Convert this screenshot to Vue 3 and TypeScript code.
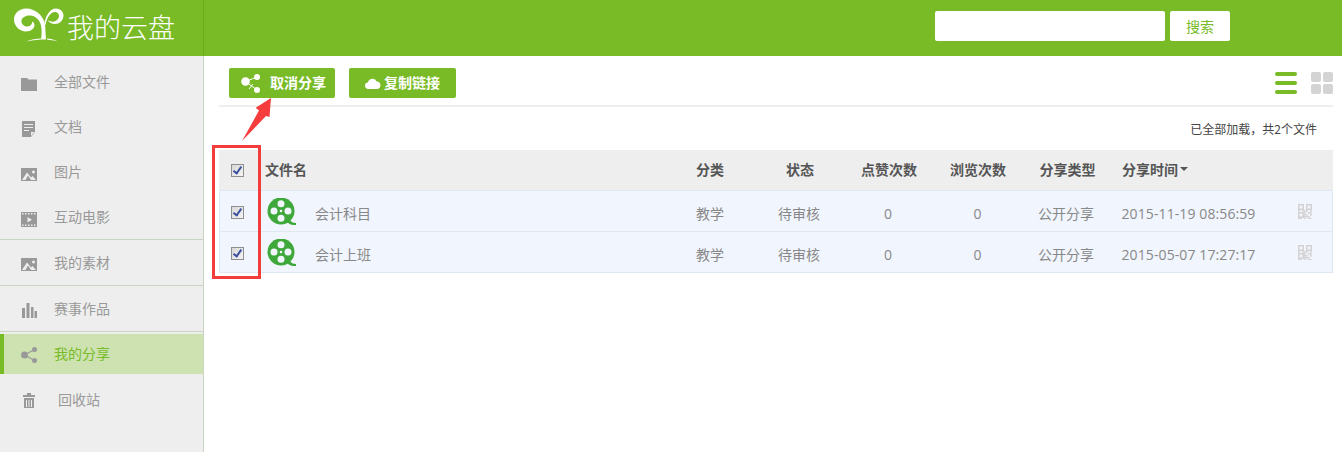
<script setup lang="ts">
interface NavItem { label: string; icon: string }
const groups: NavItem[][] = [
  [
    { label: '全部文件', icon: 'folder' },
    { label: '文档', icon: 'doc' },
    { label: '图片', icon: 'image' },
    { label: '互动电影', icon: 'film' },
  ],
  [{ label: '我的素材', icon: 'image' }],
  [{ label: '赛事作品', icon: 'bars' }],
]
const rows = [
  { name: '会计科目', time: '2015-11-19 08:56:59' },
  { name: '会计上班', time: '2015-05-07 17:27:17' },
]
const qrCells = [
  [0,0,0,0,0,0,0],[0,0,0,0,0,0,0],[0,0,0,0,0,0,0],[1,0,1,1,1,0,1],[0,0,0,1,0,1,1],[0,0,0,1,1,0,1],[0,0,0,1,1,1,0],[1,1,0,1,0,1,1],
].flatMap((r, y) => r.map((v, x) => ({ x, y, v }))).filter(c => c.v)
</script>

<template>
  <div class="page">
    <header class="top">
      <div class="brand">
        <svg class="logo" width="50" height="34" viewBox="14 9.500 50 34">
          <path fill="#fff" d="M26 10C19 10 14 15 14 21 14 28 20 33 26 33 31 33 34.500 30 34.500 26.500 34.500 25 33.500 23.500 32.500 23 32 26 30 28 27 28 24 28 21 25.500 21.500 22 22 19 26 16.500 30 17 36 17.500 41 22 41.500 30 41.800 34 41.500 38 41 41L46 41C45.500 36 45.500 30 45 26 44 18 36 10 26 10Z"/>
          <path fill="#fff" d="M44.500 24C46 17 50 10 56 10 60 10 63.500 13 63.500 17 63.500 22 59 25.500 55 25.500 52 25.500 49 24 47.500 21.500 50 23 52 23.500 54 23 57 22.500 59 20 59 17.500 59 15 57 13.500 55 13.500 51 13.500 47 18 45.500 27Z"/>
          <path fill="#fff" d="M26 43C31 41 36 40 41 40V41C36 41.500 31 42 26 43ZM47 40C50 40 54 41 58 43 54 42 50 41.500 47 41Z"/>
        </svg>
        <span class="title">我的云盘</span>
      </div>
      <div class="search">
        <input class="search-input" type="text" />
        <button class="search-btn">搜索</button>
      </div>
    </header>

    <div class="body">
      <aside class="side">
        <div v-for="(group, i) in groups" :key="i" class="group">
          <a v-for="item in group" :key="item.label" class="nav">
            <svg class="nav-icon" width="16" height="16" viewBox="0 0 16 16" fill="#999">
              <path v-if="item.icon === 'folder'" d="M0 2h6l1.500 1.500H16V15H0z"/>
              <path v-else-if="item.icon === 'doc'" fill-rule="evenodd" d="M1 0h13v11l-4 5H1zM3 3v1h9V3zM3 6v1h9V6zM3 9v1h5V9zM10 11v4l3.500-4z"/>
              <path v-else-if="item.icon === 'image'" fill-rule="evenodd" d="M0 2h16v13H0zM1 14h3.500L7 9.500 10 14h5l-3.500-4-1.500 1.500L6 6.500zM12.500 4.500a1.500 1.500 0 1 0 .01 0z"/>
              <path v-else-if="item.icon === 'film'" fill-rule="evenodd" d="M0 1h16v15H0zM1 2v1.500h1.500V2zM4 2v1.500h1.500V2zM7 2v1.500h1.500V2zM10 2v1.500h1.500V2zM13 2v1.500h1.500V2zM1 13.500V15h1.500v-1.500zM4 13.500V15h1.500v-1.500zM7 13.500V15h1.500v-1.500zM10 13.500V15h1.500v-1.500zM13 13.500V15h1.500v-1.500zM6.500 6v5.500l4.500-2.700z"/>
              <path v-else d="M1 6h3v10H1zM5.500 1h3v15h-3zM10 5h2.500v11H10zM13.500 9H16v7h-2.500z"/>
            </svg>
            <span class="nav-text">{{ item.label }}</span>
          </a>
        </div>
        <a class="nav active">
          <svg class="nav-icon" width="16" height="16" viewBox="0 0 16 16" fill="#999">
            <circle cx="3.500" cy="8" r="3.500"/><circle cx="13.500" cy="2.500" r="2.500"/><circle cx="13.500" cy="13.500" r="2.500"/>
            <path d="M3.500 8l10-5.500M3.500 8l10 5.500" stroke="#999" stroke-width="1.200"/>
          </svg>
          <span class="nav-text">我的分享</span>
        </a>
        <a class="nav trash">
          <svg class="nav-icon" width="14" height="16" viewBox="0 0 14 16" fill="#999">
            <path fill-rule="evenodd" d="M5 0h4v2h4v2H1V2h4zM2 5h10v10H2zM4 7v7h1V7zM6.500 7v7h1V7zM9 7v7h1V7z"/>
          </svg>
          <span class="nav-text">回收站</span>
        </a>
      </aside>

      <main class="main">
        <div class="toolbar">
          <button class="act act-cancel">
            <svg width="20" height="20" viewBox="0 0 20 20" fill="#fff">
              <circle cx="4.500" cy="8.500" r="4.300"/><circle cx="16" cy="4" r="3"/><circle cx="16" cy="17" r="3"/>
              <path d="M4.500 8.500L16 4M4.500 8.500L16 17M8 16l4-5" stroke="#fff" stroke-width="1"/>
            </svg>
            <span class="act-text">取消分享</span>
          </button>
          <button class="act act-copy">
            <svg width="16" height="11" viewBox="0 0 16 11" fill="#fff">
              <path d="M3.500 11a3.200 3.200 0 0 1-.5-6.400A4.600 4.600 0 0 1 11.800 3.500 3.800 3.800 0 0 1 12.500 11z"/>
            </svg>
            <span class="act-text">复制链接</span>
          </button>
          <div class="views">
            <div class="v-list"><i></i><i></i><i></i></div>
            <div class="v-grid"><i></i><i></i><i></i><i></i></div>
          </div>
        </div>

        <p class="loaded">已全部加载，共2个文件</p>

        <div class="table">
          <div class="grid head">
            <span class="cb"><span class="check"></span></span>
            <span class="name-col">文件名</span>
            <span>分类</span>
            <span>状态</span>
            <span>点赞次数</span>
            <span>浏览次数</span>
            <span>分享类型</span>
            <span class="sort">分享时间<b class="caret"></b></span>
            <span></span>
          </div>
          <div v-for="row in rows" :key="row.name" class="grid row">
            <span class="cb"><span class="check"></span></span>
            <span class="name-col file">
              <svg width="30" height="28" viewBox="0 0 30 28">
                <circle cx="14" cy="13" r="13.500" fill="#3fa83a"/>
                <path d="M20 24c3 3 6 3 9 3v-2c-3 0-5-1-6-3z" fill="#3fa83a"/>
                <g fill="#f1f5fd">
                  <circle cx="14" cy="5.800" r="3.500"/>
                  <circle cx="14" cy="20.200" r="3.500"/>
                  <circle cx="7" cy="13" r="3.500"/>
                  <circle cx="21" cy="13" r="3.500"/>
                  <circle cx="14" cy="13" r="1.300"/>
                </g>
              </svg>
              <span class="fname">{{ row.name }}</span>
            </span>
            <span>教学</span>
            <span>待审核</span>
            <span class="num">0</span>
            <span class="num">0</span>
            <span>公开分享</span>
            <span class="num time">{{ row.time }}</span>
            <span class="qr">
              <svg width="14" height="15" viewBox="0 0 14 15" fill="#d2d2d2">
                <path fill-rule="evenodd" d="M0 0h6v6H0zM1.500 1.500v3h3v-3zM8 0h6v6H8zM9.500 1.500v3h3v-3zM0 8h6v6H0zM1.500 9.500v3h3v-3z"/>
                <rect v-for="c in qrCells" :key="c.x + '-' + c.y" :x="c.x * 2" :y="c.y * 2" width="1.700" height="1.700"/>
              </svg>
            </span>
          </div>
        </div>
      </main>
    </div>

    <div class="mark-box"></div>
    <svg class="mark-arrow" width="36" height="48" viewBox="0 0 36 48">
      <path fill="#f63c3c" d="M32 1 16.700 10.700 20 13.500 3 44 27 19 30.500 20Z"/>
    </svg>
  </div>
</template>

<style>
html, body { margin: 0; background: #fff; }
</style>

<style scoped>
.page {
  position: relative;
  width: 1342px;
  height: 452px;
  overflow: hidden;
  display: flex;
  flex-direction: column;
  font-family: "Noto Sans CJK SC", "Liberation Sans", sans-serif;
  font-size: 14px;
  color: #888;
}
.top {
  height: 56px;
  flex: none;
  display: flex;
  align-items: flex-start;
  background: #78bb27;
}
.brand {
  width: 204px;
  height: 56px;
  box-sizing: border-box;
  flex: none;
  display: flex;
  align-items: center;
  padding-left: 14px;
  border-right: 1px solid #6cab20;
}
.logo { flex: none; margin-top: -6px; }
.title {
  margin-left: 3px;
  font-size: 27px;
  font-weight: 300;
  color: #fff;
  line-height: 54px;
  padding-bottom: 2px;
  white-space: nowrap;
}
.search {
  margin-left: 731px;
  margin-top: 11px;
  display: flex;
  gap: 5px;
}
.search-input {
  width: 230px;
  height: 30px;
  box-sizing: border-box;
  border: 0;
  border-radius: 2px;
  background: #fff;
  padding: 0;
}
.search-btn {
  width: 60px;
  height: 30px;
  border: 0;
  border-radius: 2px;
  background: #fff;
  color: #78bb27;
  font: inherit;
  font-size: 14px;
  padding: 0;
}
.body { flex: 1; display: flex; min-height: 0; }
.side {
  width: 204px;
  flex: none;
  box-sizing: border-box;
  background: #eee;
  border-right: 1px solid #c8d5c0;
  padding-top: 3px;
}
.group { border-bottom: 1px solid #c8d5c0; }
.group:nth-child(3) { margin-bottom: 2px; }
.nav {
  display: flex;
  align-items: center;
  height: 45px;
  padding-left: 21px;
  color: #999;
  font-size: 14px;
  box-sizing: border-box;
}
.nav-icon { flex: none; margin: 2px 17px 0 0; }
.group:first-child .nav-icon { margin-top: 4px; }
.nav-text { margin-top: -2px; }
.active {
  height: 40px;
  background: #cde2b0;
  border-left: 4px solid #78bb27;
  padding-left: 17px;
  color: #78bb27;
}
.trash {
  height: 52px;
  padding-left: 22px;
}
.trash .nav-icon { margin-right: 22px; }
.main {
  flex: 1;
  min-width: 0;
  box-sizing: border-box;
  padding: 12px 9px 0 15px;
}
.toolbar {
  display: flex;
  align-items: flex-start;
  height: 37px;
  border-bottom: 2px solid #eee;
  padding-left: 10px;
}
.act {
  height: 30px;
  border: 0;
  border-radius: 2px;
  background: #78bb27;
  color: #fff;
  font: inherit;
  font-size: 14px;
  font-weight: 700;
  display: flex;
  align-items: center;
  padding: 0;
  white-space: nowrap;
}
.act-text { margin-top: -2px; }
.act-cancel { width: 106px; padding-left: 12px; gap: 9px; }
.act-copy { width: 107px; margin-left: 14px; padding-left: 16px; gap: 3px; }
.views { margin-left: auto; display: flex; gap: 14px; align-items: flex-start; padding-top: 4px; }
.v-list { width: 22px; display: flex; flex-direction: column; gap: 5px; }
.v-list i { display: block; height: 4px; border-radius: 2px; background: #78bb27; }
.v-grid { width: 22px; display: grid; grid-template-columns: 10px 10px; gap: 2px; }
.v-grid i { display: block; height: 10px; border-radius: 2px; background: #d4d4d4; }
.loaded {
  margin: 0;
  height: 43px;
  padding: 14px 16px 0 0;
  box-sizing: border-box;
  text-align: right;
  font-size: 12px;
  line-height: 16px;
  color: #444;
}
.table { color: #888; }
.grid {
  display: grid;
  align-items: center;
  text-align: center;
  box-sizing: border-box;
}
.head {
  height: 41px;
  background: #eee;
  border-bottom: 1px solid #dfe7f1;
  color: #555;
  font-weight: 700;
  font-size: 14px;
  padding-bottom: 2px;
  grid-template-columns: 36px 410px 90px 90px 88px 90px 89px 151px 70px;
}
.head .cb { padding-top: 2px; }
.row {
  height: 41px;
  background: #f1f5fd;
  border: 1px solid #dfe7f1;
  border-top: 0;
  padding-top: 4px;
  grid-template-columns: 35px 410px 90px 88px 90px 89px 88px 153px 69px;
}
.row .cb { margin-top: -2px; padding-right: 1px; }
.cb { display: flex; justify-content: center; }
.check {
  position: relative;
  width: 11px;
  height: 11px;
  border: 1px solid #8f8f8f;
  background: linear-gradient(135deg, #d8d8d8, #f4f4f4);
  display: block;
}
.check::after {
  content: "";
  position: absolute;
  left: 3.500px;
  top: 0;
  width: 3px;
  height: 7px;
  border: solid #3d4f9f;
  border-width: 0 2px 2px 0;
  transform: rotate(35deg);
}
.name-col { text-align: left; padding-left: 10px; }
.file { display: flex; align-items: center; padding-left: 12px; height: 26px; }
.file svg { flex: none; margin-top: -2px; }
.fname { margin-left: 18px; }
.num { font-family: "Open Sans", "Liberation Sans", sans-serif; font-size: 14px; }
.time { letter-spacing: 0.1px; padding-left: 4px; white-space: nowrap; }
.sort { display: flex; align-items: center; padding-left: 10px; }
.caret {
  margin-left: 2px;
  width: 0;
  height: 0;
  border-style: solid;
  border-width: 4px 4px 0;
  border-color: #555 transparent transparent;
}
.qr { display: flex; justify-content: flex-end; padding-right: 20px; margin-top: -4px; }
.mark-box {
  position: absolute;
  left: 212px;
  top: 145px;
  width: 49px;
  height: 134px;
  box-sizing: border-box;
  border: 3px solid #f33c3c;
}
.mark-arrow {
  position: absolute;
  left: 239px;
  top: 97px;
}
</style>
